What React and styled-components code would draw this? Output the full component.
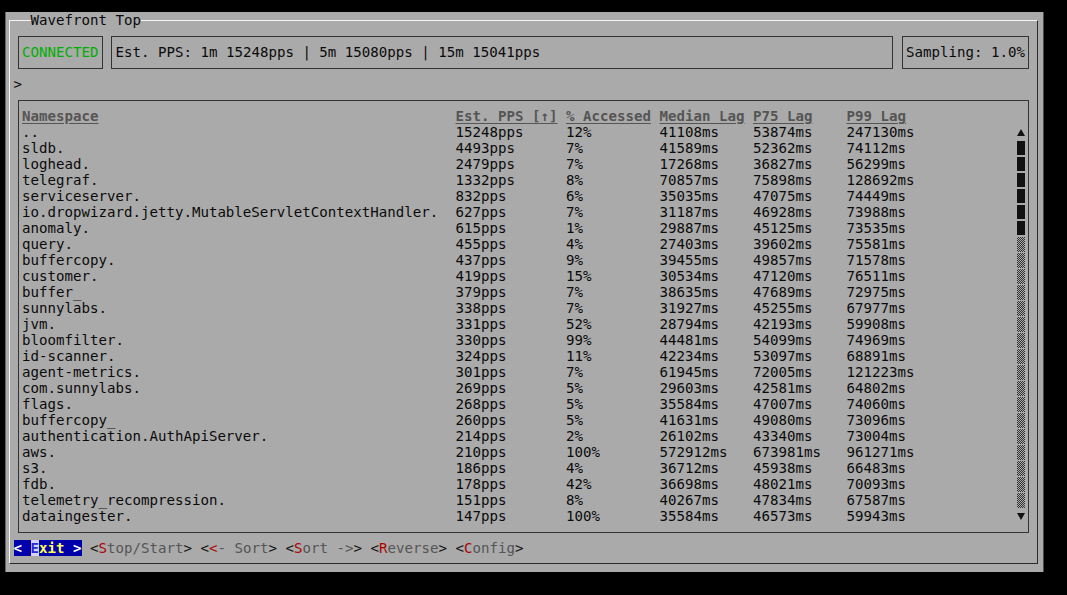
import React from "react";
import styled, { createGlobalStyle } from "styled-components";

const CW = 8.5; // terminal cell width
const RH = 16; // terminal row height
const cells = (n) => `${n * CW}px`;

const GlobalStyle = createGlobalStyle`
  html, body { margin: 0; padding: 0; background: #000; }
  body { font-family: "DejaVu Sans Mono", "Liberation Mono", monospace; }
`;

const Screen = styled.div`
  width: 1067px;
  height: 595px;
  box-sizing: border-box;
  padding: 12px 0 0 5px;
  background: #000;
`;

const Window = styled.div`
  width: 1038px;
  height: 560px;
  box-sizing: border-box;
  padding: 8px 0 0 4.25px;
  background: #aaaaaa;
  box-shadow: inset 1px 0 0 #666, 1px 0 0 #4a4a4a;
  color: #0a0a0a;
  font-size: 14.12px;
  line-height: ${RH}px;
  white-space: pre;
`;

const Frame = styled.div`
  position: relative;
  width: ${120 * CW + 8.5}px;
  box-sizing: border-box;
  border-top: 1px solid #f4f4f4;
  border-left: 1px solid #f4f4f4;
  border-right: 1px solid #2a2a2a;
  border-bottom: 1px solid #2a2a2a;
  padding: 7px 3.25px;
  display: flex;
  flex-direction: column;
`;

const Title = styled.span`
  position: absolute;
  top: -9px;
  left: 20.25px;
  height: ${RH}px;
  background: #aaaaaa;
`;

const StatusRow = styled.div`
  display: flex;
  height: ${3 * RH}px;
`;

const Box = styled.div`
  width: ${(p) => p.$cells * CW - CW}px;
  height: 33px;
  margin: 8px 4.25px 7px;
  box-sizing: border-box;
  border: 1px solid #333;
  padding: 7px 0 0 3.25px;
  color: ${(p) => p.$color || "#0a0a0a"};
  overflow: hidden;
`;

const Prompt = styled.div`
  height: ${RH}px;
`;

const TableBox = styled.div`
  margin: 8px 4.25px 7px;
  box-sizing: border-box;
  border: 1px solid #333;
  padding: 7px 3.25px 8px;
  display: flex;
  flex-direction: column;
`;

const COLS = `${cells(51)} ${cells(13)} ${cells(11)} ${cells(11)} ${cells(11)} ${cells(20)}`;

const HeaderRow = styled.div`
  display: grid;
  grid-template-columns: ${COLS};
  height: ${RH}px;
`;

const HeaderCell = styled.div`
  color: #555;
  font-weight: bold;
  text-decoration: underline;
  text-underline-offset: 2px;
`;

const Body = styled.div`
  display: flex;
`;

const Rows = styled.div`
  width: ${cells(117)};
  display: flex;
  flex-direction: column;
`;

const DataRow = styled.div`
  display: grid;
  grid-template-columns: ${COLS};
  height: ${RH}px;
`;

const Cell = styled.div`
  min-width: 0;
`;

const ScrollCol = styled.div`
  width: ${cells(1)};
  display: flex;
  flex-direction: column;
`;

const ScrollCell = styled.div`
  height: ${RH}px;
  display: flex;
  justify-content: center;
  align-items: ${(p) => (p.$kind === "arrow" ? "center" : "stretch")};
  box-sizing: border-box;
  padding: ${(p) => (p.$kind === "thumb" ? "1px 0" : p.$kind === "track" ? "1px 0 0" : "0")};
`;

const Thumb = styled.div`
  width: 8px;
  background: #111;
`;

const Track = styled.div`
  width: 8px;
  background-image: repeating-conic-gradient(#333 0% 25%, #aaaaaa 0% 50%);
  background-size: 2px 2px;
`;

const ButtonBar = styled.div`
  display: flex;
  gap: ${CW}px;
  height: ${RH}px;
`;

const Button = styled.div`
  width: ${(p) => cells(p.$cells)};
  display: flex;
  color: #555;
`;

const ExitButton = styled.div`
  width: ${cells(8)};
  display: flex;
  background: #0000aa;
  font-weight: bold;
`;

const Ch = styled.span`
  display: inline-block;
  width: ${(p) => cells(p.$n || 1)};
  color: ${(p) => p.$color};
  background: ${(p) => p.$bg || "transparent"};
  font-weight: ${(p) => (p.$bold ? "bold" : "inherit")};
`;

const ROWS = [
  ["..", "15248pps", "12%", "41108ms", "53874ms", "247130ms"],
  ["sldb.", "4493pps", "7%", "41589ms", "52362ms", "74112ms"],
  ["loghead.", "2479pps", "7%", "17268ms", "36827ms", "56299ms"],
  ["telegraf.", "1332pps", "8%", "70857ms", "75898ms", "128692ms"],
  ["serviceserver.", "832pps", "6%", "35035ms", "47075ms", "74449ms"],
  ["io.dropwizard.jetty.MutableServletContextHandler.", "627pps", "7%", "31187ms", "46928ms", "73988ms"],
  ["anomaly.", "615pps", "1%", "29887ms", "45125ms", "73535ms"],
  ["query.", "455pps", "4%", "27403ms", "39602ms", "75581ms"],
  ["buffercopy.", "437pps", "9%", "39455ms", "49857ms", "71578ms"],
  ["customer.", "419pps", "15%", "30534ms", "47120ms", "76511ms"],
  ["buffer_", "379pps", "7%", "38635ms", "47689ms", "72975ms"],
  ["sunnylabs.", "338pps", "7%", "31927ms", "45255ms", "67977ms"],
  ["jvm.", "331pps", "52%", "28794ms", "42193ms", "59908ms"],
  ["bloomfilter.", "330pps", "99%", "44481ms", "54099ms", "74969ms"],
  ["id-scanner.", "324pps", "11%", "42234ms", "53097ms", "68891ms"],
  ["agent-metrics.", "301pps", "7%", "61945ms", "72005ms", "121223ms"],
  ["com.sunnylabs.", "269pps", "5%", "29603ms", "42581ms", "64802ms"],
  ["flags.", "268pps", "5%", "35584ms", "47007ms", "74060ms"],
  ["buffercopy_", "260pps", "5%", "41631ms", "49080ms", "73096ms"],
  ["authentication.AuthApiServer.", "214pps", "2%", "26102ms", "43340ms", "73004ms"],
  ["aws.", "210pps", "100%", "572912ms", "673981ms", "961271ms"],
  ["s3.", "186pps", "4%", "36712ms", "45938ms", "66483ms"],
  ["fdb.", "178pps", "42%", "36698ms", "48021ms", "70093ms"],
  ["telemetry_recompression.", "151pps", "8%", "40267ms", "47834ms", "67587ms"],
  ["dataingester.", "147pps", "100%", "35584ms", "46573ms", "59943ms"],
];

const HEADERS = ["Namespace", "Est. PPS [\u2191]", "% Accessed", "Median Lag", "P75 Lag", "P99 Lag"];

const scrollKinds = ROWS.map((_, i) =>
  i === 0 ? "up" : i === ROWS.length - 1 ? "down" : i <= 6 ? "thumb" : "track"
);

function Arrow({ dir }) {
  return (
    <svg width="8" height="7" viewBox="0 0 8 7">
      {dir === "up" ? (
        <polygon points="4,0 8,7 0,7" fill="#111" />
      ) : (
        <polygon points="0,0 8,0 4,7" fill="#111" />
      )}
    </svg>
  );
}

function ScrollBar() {
  return (
    <ScrollCol>
      {scrollKinds.map((k, i) => {
        if (k === "up" || k === "down")
          return (
            <ScrollCell key={i} $kind="arrow">
              <Arrow dir={k} />
            </ScrollCell>
          );
        return (
          <ScrollCell key={i} $kind={k}>
            {k === "thumb" ? <Thumb /> : <Track />}
          </ScrollCell>
        );
      })}
    </ScrollCol>
  );
}

function HotButton({ hot, pre = "", rest, tail = ">" }) {
  const n = 1 + pre.length + hot.length + rest.length + tail.length;
  return (
    <Button $cells={n}>
      <Ch $color="#111">{"<"}</Ch>
      {pre && <Ch $n={pre.length} $color="#555">{pre}</Ch>}
      <Ch $color="#b00000">{hot}</Ch>
      <Ch $n={rest.length} $color="#555">{rest}</Ch>
      <Ch $color="#111">{tail}</Ch>
    </Button>
  );
}

export default function App() {
  return (
    <>
      <GlobalStyle />
      <Screen>
        <Window>
          <Frame>
            <Title>Wavefront Top</Title>
            <StatusRow>
              <Box $cells={11} $color="#00b000">CONNECTED</Box>
              <Box $cells={93}>Est. PPS: 1m 15248pps | 5m 15080pps | 15m 15041pps</Box>
              <Box $cells={16}>Sampling: 1.0%</Box>
            </StatusRow>
            <Prompt>&gt;</Prompt>
            <TableBox>
              <HeaderRow>
                {HEADERS.map((h) => (
                  <HeaderCell key={h}>
                    <span>{h}</span>
                  </HeaderCell>
                ))}
              </HeaderRow>
              <Body>
                <Rows>
                  {ROWS.map((r) => (
                    <DataRow key={r[0]}>
                      {r.map((v, j) => (
                        <Cell key={j}>{v}</Cell>
                      ))}
                    </DataRow>
                  ))}
                </Rows>
                <ScrollBar />
              </Body>
            </TableBox>
            <ButtonBar>
              <ExitButton>
                <Ch $color="#fff">{"<"}</Ch>
                <Ch> </Ch>
                <Ch $color="#2a2acc" $bg="#d4d4ff">E</Ch>
                <Ch $n={3} $color="#ffff55">xit</Ch>
                <Ch> </Ch>
                <Ch $color="#fff">{">"}</Ch>
              </ExitButton>
              <HotButton hot="S" rest="top/Start" />
              <HotButton hot="<" rest="- Sort" />
              <HotButton hot="S" rest="ort ->" />
              <HotButton hot="R" rest="everse" />
              <HotButton hot="C" rest="onfig" />
            </ButtonBar>
          </Frame>
        </Window>
      </Screen>
    </>
  );
}
